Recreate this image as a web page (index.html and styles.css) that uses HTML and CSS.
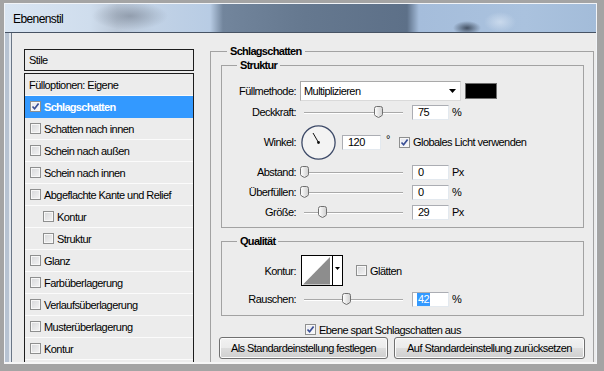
FILE: index.html
```html
<!DOCTYPE html>
<html lang="de">
<head>
<meta charset="utf-8">
<title>Ebenenstil</title>
<link rel="stylesheet" href="styles.css">
</head>
<body>
<div class="screen">
  <div class="win">
    <div class="titlebar"><span class="title">Ebenenstil</span></div>
    <div class="client">
      <div class="styles-col">
        <div class="styles-head">Stile</div>
        <ul class="styles-list">
          <li class="item plain">Fülloptionen: Eigene</li>
          <li class="item selected"><span class="cb checked"><svg width="9" height="9" viewBox="0 0 9 9"><path d="M1.5 4.5 L3.6 6.8 L7.6 1.6" fill="none" stroke="#3a4f95" stroke-width="1.7"/></svg></span>Schlagschatten</li>
          <li class="item"><span class="cb"></span>Schatten nach innen</li>
          <li class="item"><span class="cb"></span>Schein nach außen</li>
          <li class="item"><span class="cb"></span>Schein nach innen</li>
          <li class="item"><span class="cb"></span>Abgeflachte Kante und Relief</li>
          <li class="item sub"><span class="cb"></span>Kontur</li>
          <li class="item sub"><span class="cb"></span>Struktur</li>
          <li class="item"><span class="cb"></span>Glanz</li>
          <li class="item"><span class="cb"></span>Farbüberlagerung</li>
          <li class="item"><span class="cb"></span>Verlaufsüberlagerung</li>
          <li class="item"><span class="cb"></span>Musterüberlagerung</li>
          <li class="item"><span class="cb"></span>Kontur</li>
        </ul>
      </div>

      <div class="group outer">
        <div class="group-title">Schlagschatten</div>

        <div class="group inner">
          <div class="group-title">Struktur</div>

          <div class="row row-blend">
            <span class="lbl">Füllmethode:</span>
            <div class="select"><span>Multiplizieren</span><svg width="7" height="4" viewBox="0 0 7 4"><path d="M0 0 H7 L3.5 4 Z" fill="#000"/></svg></div>
            <span class="swatch"></span>
          </div>

          <div class="row">
            <span class="lbl">Deckkraft:</span>
            <div class="slider"><svg class="thumb" style="left:75%" width="9" height="12" viewBox="0 0 9 12"><defs><linearGradient id="tg1" x1="0" y1="0" x2="1" y2="0"><stop offset="0" stop-color="#ffffff"/><stop offset="1" stop-color="#cfcfcf"/></linearGradient></defs><path d="M0.5 2.5 Q0.5 0.5 2.5 0.5 H6.5 Q8.5 0.5 8.5 2.5 V8.5 Q8.5 10 4.5 11.5 Q0.5 10 0.5 8.5 Z" fill="url(#tg1)" stroke="#707070"/></svg></div>
            <span class="field">75</span><span class="unit">%</span>
          </div>

          <div class="row row-angle">
            <span class="lbl">Winkel:</span>
            <svg class="dial" width="35" height="35" viewBox="0 0 35 35"><circle cx="17.5" cy="17.5" r="16.6" fill="#f3f3f3" stroke="#3d4a68" stroke-width="1.3"/><line x1="17.5" y1="17.5" x2="12" y2="8" stroke="#111" stroke-width="1"/><circle cx="17.5" cy="17.5" r="1.4" fill="#111"/></svg>
            <span class="field field-angle">120</span><span class="deg">°</span>
            <span class="check"><span class="cb checked"><svg width="9" height="9" viewBox="0 0 9 9"><path d="M1.5 4.5 L3.6 6.8 L7.6 1.6" fill="none" stroke="#3a4f95" stroke-width="1.7"/></svg></span>Globales Licht verwenden</span>
          </div>

          <div class="row">
            <span class="lbl">Abstand:</span>
            <div class="slider"><svg class="thumb" style="left:0%" width="9" height="12" viewBox="0 0 9 12"><path d="M0.5 2.5 Q0.5 0.5 2.5 0.5 H6.5 Q8.5 0.5 8.5 2.5 V8.5 Q8.5 10 4.5 11.5 Q0.5 10 0.5 8.5 Z" fill="url(#tg1)" stroke="#707070"/></svg></div>
            <span class="field">0</span><span class="unit">Px</span>
          </div>

          <div class="row">
            <span class="lbl">Überfüllen:</span>
            <div class="slider"><svg class="thumb" style="left:0%" width="9" height="12" viewBox="0 0 9 12"><path d="M0.5 2.5 Q0.5 0.5 2.5 0.5 H6.5 Q8.5 0.5 8.5 2.5 V8.5 Q8.5 10 4.5 11.5 Q0.5 10 0.5 8.5 Z" fill="url(#tg1)" stroke="#707070"/></svg></div>
            <span class="field">0</span><span class="unit">%</span>
          </div>

          <div class="row">
            <span class="lbl">Größe:</span>
            <div class="slider"><svg class="thumb" style="left:18%" width="9" height="12" viewBox="0 0 9 12"><path d="M0.5 2.5 Q0.5 0.5 2.5 0.5 H6.5 Q8.5 0.5 8.5 2.5 V8.5 Q8.5 10 4.5 11.5 Q0.5 10 0.5 8.5 Z" fill="url(#tg1)" stroke="#707070"/></svg></div>
            <span class="field">29</span><span class="unit">Px</span>
          </div>
        </div>

        <div class="group inner quality">
          <div class="group-title">Qualität</div>

          <div class="row row-contour">
            <span class="lbl">Kontur:</span>
            <svg class="contour" width="42" height="31" viewBox="0 0 42 31"><rect x="0.5" y="0.5" width="41" height="30" fill="#fff" stroke="#000"/><path d="M2 29.5 L29 2 V29.5 Z" fill="#8d8d8d"/><line x1="31.5" y1="1" x2="31.5" y2="30" stroke="#000"/><path d="M34 12 H39 L36.5 15 Z" fill="#000"/></svg>
            <span class="check check-smooth"><span class="cb"></span>Glätten</span>
          </div>

          <div class="row row-noise">
            <span class="lbl">Rauschen:</span>
            <div class="slider"><svg class="thumb" style="left:42%" width="9" height="12" viewBox="0 0 9 12"><path d="M0.5 2.5 Q0.5 0.5 2.5 0.5 H6.5 Q8.5 0.5 8.5 2.5 V8.5 Q8.5 10 4.5 11.5 Q0.5 10 0.5 8.5 Z" fill="url(#tg1)" stroke="#707070"/></svg></div>
            <span class="field"><span class="sel">42</span></span><span class="unit">%</span>
          </div>
        </div>

        <div class="check check-row"><span class="cb checked"><svg width="9" height="9" viewBox="0 0 9 9"><path d="M1.5 4.5 L3.6 6.8 L7.6 1.6" fill="none" stroke="#3a4f95" stroke-width="1.7"/></svg></span>Ebene spart Schlagschatten aus</div>

        <div class="btns">
          <button class="btn btn-a" type="button">Als Standardeinstellung festlegen</button>
          <button class="btn btn-b" type="button">Auf Standardeinstellung zurücksetzen</button>
        </div>
      </div>
    </div>
  </div>
</div>
</body>
</html>
```
FILE: styles.css
```css
* { box-sizing: border-box; }
html, body { margin: 0; padding: 0; }
body {
  width: 604px;
  height: 371px;
  overflow: hidden;
  font-family: "Liberation Sans", Arial, sans-serif;
  font-size: 11px;
  letter-spacing: -0.55px;
  color: #000;
}
.screen {
  width: 604px;
  height: 371px;
  background: #a4a4a4;
  padding: 3px 7px 7px 4px;
}
.win {
  height: 100%;
  display: flex;
  flex-direction: column;
  border: 1px solid #f1f4f8;
  border-bottom: 2px solid #f6f6f6;
  background: #b7c3d2;
}
.titlebar {
  flex: none;
  height: 29px;
  border-bottom: 1px solid #475364;
  padding: 3px 0 0 8px;
  line-height: 25px;
  font-size: 12px;
  letter-spacing: -0.6px;
  color: #000;
  background:
    radial-gradient(ellipse 14px 7px at 462px 24px, rgba(35,45,60,0.75), rgba(35,45,60,0) 100%),
    radial-gradient(ellipse 16px 10px at 495px 18px, rgba(205,220,238,0.9), rgba(205,220,238,0) 100%),
    radial-gradient(ellipse 38px 14px at 125px 12px, rgba(110,120,135,0.55), rgba(110,120,135,0) 100%),
    linear-gradient(to right, #d9e5f2 0px, #cfdded 85px, #bcc9d9 112px, #c1d2e6 150px, #b8cce4 205px, #72859c 218px, #65788f 300px, #5d7088 402px, #a5bddb 414px, #aac2de 520px, #a3bcd9 592px);
}
.client {
  flex: 1;
  min-height: 0;
  display: flex;
  align-items: flex-start;
  margin-left: 6px;
  border-left: 1px solid #6b7787;
  box-shadow: -2px 0 0 #e3e8ee;
  background: #ececec;
  padding: 11px 0 0 12px;
  overflow: hidden;
}

/* styles list */
.styles-col {
  flex: none;
  width: 170px;
  height: 340px;
  margin-top: 5px;
  display: flex;
  flex-direction: column;
}
.styles-head {
  height: 22px;
  border: 1px solid #1d1d1d;
  padding-left: 4px;
  line-height: 20px;
}
.styles-list {
  flex: 1;
  margin: 2px 0 0;
  padding: 0;
  list-style: none;
  border: 1px solid #1d1d1d;
  border-bottom: none;
}
.item {
  height: 22px;
  border-bottom: 1px solid #fbfbfb;
  display: flex;
  align-items: center;
  padding-left: 5px;
  white-space: nowrap;
}
.item.plain { padding-left: 4px; }
.item.sub { padding-left: 18px; }
.item.selected {
  background: #3399ff;
  color: #fff;
  font-weight: bold;
  letter-spacing: -0.7px;
  border-bottom-color: #3399ff;
}

/* checkbox */
.cb {
  flex: none;
  width: 11px;
  height: 11px;
  margin-right: 3px;
  border: 1px solid #8e8f8f;
  background: linear-gradient(135deg, #d6d7d9 0%, #f4f4f4 100%);
  box-shadow: inset 0 0 0 1px #f7f7f7;
  display: inline-flex;
  align-items: center;
  justify-content: center;
}
.cb.checked { background: linear-gradient(135deg, #e4e6ee 0%, #fbfbfd 100%); }
.check {
  display: flex;
  align-items: center;
  white-space: nowrap;
}

/* group boxes */
.group { border: 1px solid #a2a2a2; }
.group-title {
  width: fit-content;
  margin-top: -8px;
  line-height: 14px;
  padding: 0 3px;
  background: #ececec;
  font-weight: bold;
  letter-spacing: -0.7px;
}
.outer {
  flex: none;
  width: 384px;
  height: 340px;
  margin: 7px 0 0 16px;
}
.outer > .group-title { margin-left: 16px; }
.inner {
  margin: 7px 9px 0 10px;
  padding-bottom: 5px;
}
.inner > .group-title { margin-left: 15px; }
.quality {
  margin-top: 13px;
  padding-bottom: 6px;
}

/* rows */
.row {
  display: flex;
  align-items: center;
  height: 20px;
  white-space: nowrap;
}
.row-blend { margin-top: 8px; height: 22px; }
.row-angle { height: 40px; }
.row-contour { margin-top: 7px; height: 31px; }
.row-noise { margin-top: 3px; }
.lbl {
  flex: none;
  width: 74px;
  text-align: right;
}
.select {
  flex: none;
  margin-left: 4px;
  width: 161px;
  height: 20px;
  background: #fff;
  border: 1px solid;
  border-color: #a9a9a9 #dadada #dadada #a9a9a9;
  display: flex;
  align-items: center;
  justify-content: space-between;
  padding: 0 4px 0 3px;
}
.swatch {
  flex: none;
  margin-left: 4px;
  width: 32px;
  height: 16px;
  background: #000;
  border: 1px solid #6e6e6e;
}
.slider {
  flex: none;
  position: relative;
  margin-left: 8px;
  width: 99px;
  height: 20px;
  background:
    linear-gradient(#a9a9a9, #a9a9a9) 0 10px / 100% 1px no-repeat,
    linear-gradient(#ffffff, #ffffff) 0 11px / 100% 1px no-repeat;
}
.thumb {
  position: absolute;
  top: 4px;
  margin-left: -4px;
  display: block;
}
.field {
  flex: none;
  margin-left: 9px;
  width: 37px;
  height: 15px;
  background: #fff;
  border: 1px solid;
  border-color: #abadb3 #e3e9ef #e3e9ef #abadb3;
  padding-left: 5px;
  line-height: 13px;
}
.sel {
  display: inline-block;
  background: #3399ff;
  color: #fff;
  padding: 0 1px;
  margin-left: -1px;
  height: 13px;
}
.unit { margin-left: 3px; }
.dial { flex: none; margin-left: 5px; display: block; }
.field-angle { margin-left: 6px; width: 39px; }
.deg {
  flex: none;
  width: 8px;
  margin-left: 5px;
  align-self: flex-start;
  margin-top: 12px;
  line-height: 10px;
}
.row-angle .check { margin-left: 5px; }
.contour { flex: none; margin-left: 5px; display: block; }
.check-smooth { margin-left: 13px; }
.check-row {
  margin: 7px 0 0 94px;
  height: 13px;
}

/* buttons */
.btns {
  display: flex;
  gap: 6px;
  margin: 1px 0 0 8px;
}
.btn {
  height: 22px;
  padding: 0;
  border: 1px solid #707070;
  border-radius: 3px;
  background: linear-gradient(#f2f2f2 0%, #ebebeb 50%, #dddddd 51%, #cfcfcf 100%);
  box-shadow: inset 0 0 0 1px #fcfcfc;
  font: inherit;
  letter-spacing: inherit;
  color: #000;
  white-space: nowrap;
}
.btn-a { width: 169px; }
.btn-b { width: 191px; }
```
